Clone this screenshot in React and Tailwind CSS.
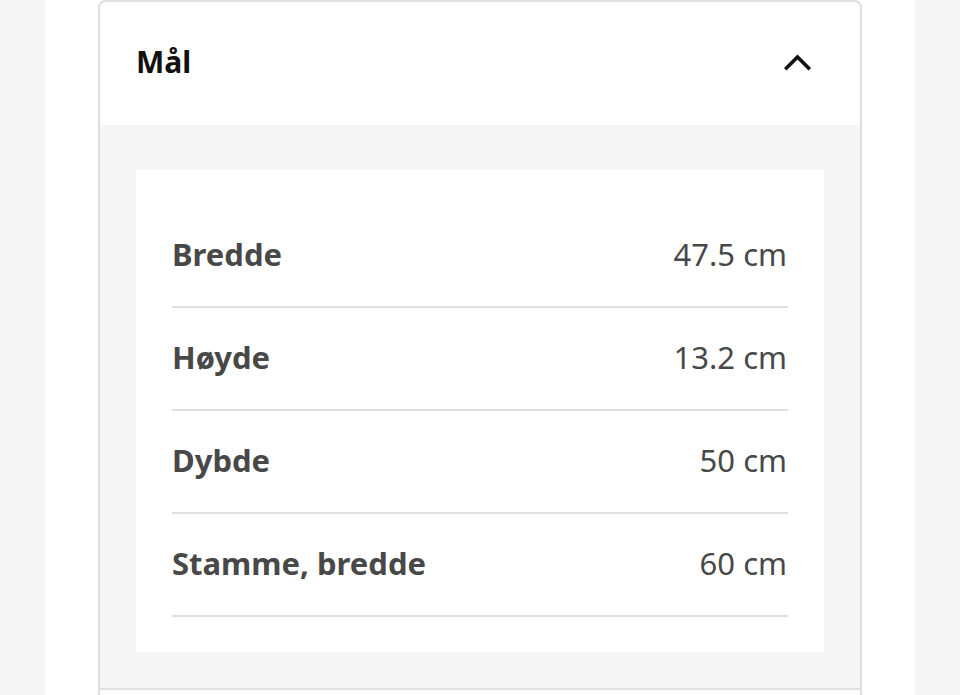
import React from 'react';

const rows = [
    { label: 'Bredde', value: '47.5 cm' },
    { label: 'Høyde', value: '13.2 cm' },
    { label: 'Dybde', value: '50 cm' },
    { label: 'Stamme, bredde', value: '60 cm' },
];

export default function App() {
    return (
        <div className="h-[695px] overflow-hidden bg-[#f5f5f5]" style={{ fontFamily: '"Noto Sans", "Open Sans", sans-serif' }}>
            <div className="mx-auto h-full w-[870px] bg-white px-[53px]">
                {/* Accordion item */}
                <div className="rounded-t-[8px] border-2 border-[#dfdfdf]">
                    <div className="flex h-[123px] items-center justify-between pb-[4px] pl-[36px] pr-[48px]">
                        <h2 className="text-[30px] font-bold leading-none text-[#111111]">Mål</h2>
                        <svg width="28" height="18" viewBox="0 0 28 18" fill="none">
                            <path d="M2.5 15 L13.5 4 L24.5 15" stroke="#111111" strokeWidth="3.6" strokeLinecap="square" />
                        </svg>
                    </div>
                    <div className="bg-[#f5f5f5] pt-[45px] pr-[36px] pb-[36px] pl-[36px]">
                        <div className="bg-white px-[36px] pt-[35px] pb-[35px]">
                            {rows.map((row) => (
                                <div
                                    key={row.label}
                                    className="flex items-center justify-between border-b-2 border-[#dfdfdf] pt-[29px] pb-[32px] text-[31px] leading-[40px] text-[#484848]"
                                >
                                    <span className="font-bold">{row.label}</span>
                                    <span className="pr-[1px]">{row.value}</span>
                                </div>
                            ))}
                        </div>
                    </div>
                </div>
                {/* Next accordion item, cut off */}
                <div className="h-[60px] border-x-2 border-[#dfdfdf]"></div>
            </div>
        </div>
    );
}
